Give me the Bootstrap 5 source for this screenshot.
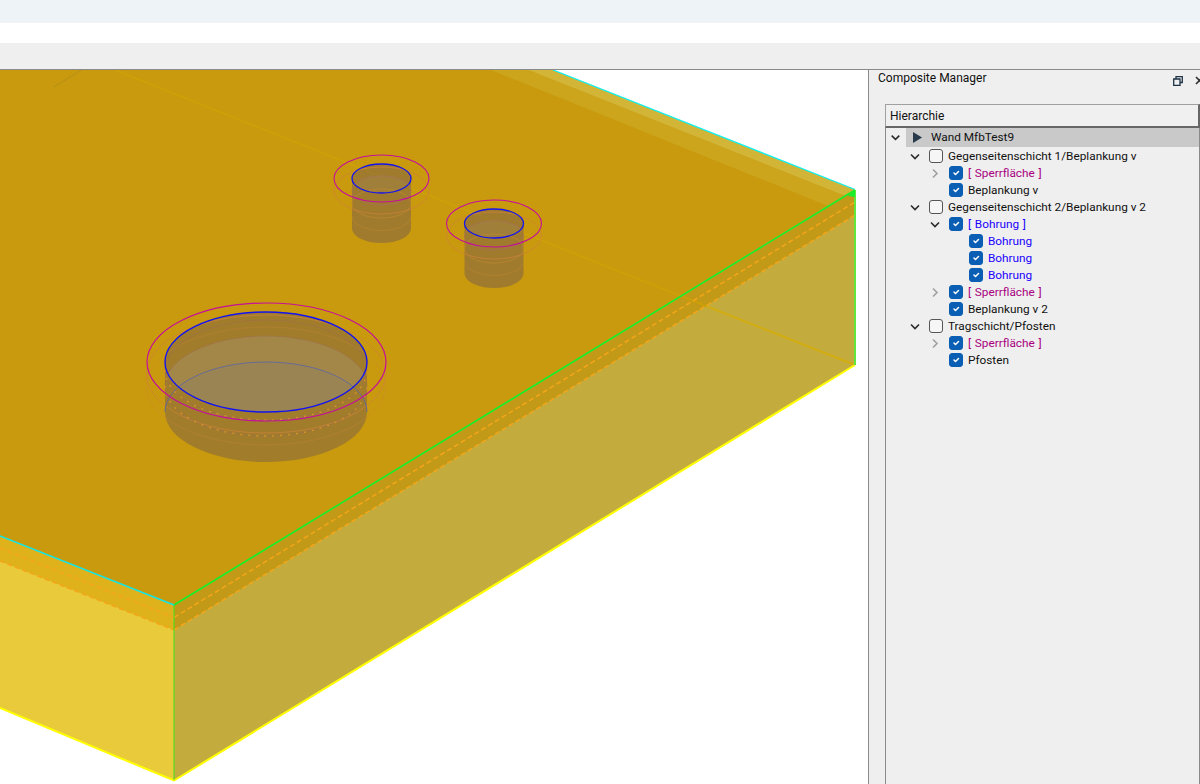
<!DOCTYPE html>
<html lang="de">
<head>
<meta charset="utf-8">
<title>Composite Manager</title>
<link href="https://cdn.jsdelivr.net/npm/bootstrap@5.3.0/dist/css/bootstrap.min.css" rel="stylesheet">
<style>
html,body{height:784px;overflow:hidden;background:#fff}
body{font-family:Roboto,"Noto Sans",sans-serif;font-size:11.8px;color:#111;line-height:17px}
.bar-a{height:23px;background:#eef3f7}
.bar-b{height:20px;background:#fff}
.bar-c{height:27px;background:#efefef;border-bottom:1px solid #8a8a8a}
.workspace{height:714px}
.viewport{width:868px;flex:none}
.viewport svg{display:block}
.side{width:332px;flex:none;background:#efefef;border-left:1px solid #8a8a8a;overflow:hidden}
.side-head{height:34px;padding:0 0 0 9px;white-space:nowrap}
.side-head .title{font-size:12px;line-height:16px;color:#111}
.win-icons{padding-top:6px;width:27px;flex:none;overflow:hidden}
.tree-wrap{margin-left:16px;margin-right:0;height:680px;border-left:1px solid #8a8a8a;border-right:1px solid #8a8a8a;width:315px}
.tree-head{height:24px;background:#f0f0f0;border:1px solid #a0a0a0;border-right:2px solid #666;border-bottom:2px solid #666;margin-left:-1px;margin-right:-1px;padding-left:4px;line-height:22px;font-size:12px}
.tree-row{height:17px;white-space:nowrap}
.tree-row.root{height:19.5px;line-height:19.5px}
.lvl-1{padding-left:19px}.lvl-2{padding-left:39px}.lvl-3{padding-left:59px}
.twisty{width:20px;height:17px;flex:none}
.root .twisty{width:19px}
.tree-check.form-check-input{width:14px;height:14px;margin:0 5px 0 4px;flex:none;border-radius:3px;border:1px solid #555;background-color:#f6f6f6;opacity:1}
.tree-check.form-check-input:checked{background-color:#0a5fb4;border-color:#0a5fb4;background-size:10px}
.root-label{margin-left:1px;flex:1 1 auto;background:#c9c9c9;height:19px;padding-left:7px}
.root-label svg{margin-right:9px}
.t-sperr{color:#a8007f;word-spacing:.8px}
.t-bohr{color:#1a00ff;word-spacing:.8px}
</style>
</head>
<body>
<svg width="0" height="0" class="position-absolute">
<defs>
<symbol id="open" viewBox="0 0 20 17"><path d="M6 6.500l4 4 4-4" fill="none" stroke="#2a2a2a" stroke-width="1.6"/></symbol>
<symbol id="closed" viewBox="0 0 20 17"><path d="M8 4.500l4 4-4 4" fill="none" stroke="#a0a0a0" stroke-width="1.6"/></symbol>
<clipPath id="clipBig"><ellipse cx="266" cy="362" rx="101" ry="50"/></clipPath>
<clipPath id="clipSmall"><ellipse cx="381.5" cy="178.5" rx="29.5" ry="14.5"/></clipPath>
</defs>
</svg>
<div class="bar-a"></div>
<div class="bar-b"></div>
<div class="bar-c"></div>
<div class="workspace d-flex">
  <div class="viewport">
    <svg width="868" height="714" viewBox="0 70 868 714">
      <rect x="0" y="70" width="868" height="714" fill="#fff"/>
      <polygon points="0,536 174,605 174,781 0,708" fill="#e8ca3a"/>
      <polygon points="0,536 174,605 174,630 0,561" fill="#dfb11b"/>
      <polygon points="174,605 855,190 855,365 174,781" fill="#c3ac3d"/>
      <polygon points="174,605 855,190 855,215 174,630" fill="#c29a17"/>
      <polygon points="0,70 553,70 855,189.5 174,605 0,536" fill="#c99a0d"/>
      <polygon points="553,70 855,189.5 845,196 528,70" fill="#d2b437"/>
      <polygon points="528,70 845,196 828,206 491,70" fill="#cca51c"/>
      <line x1="115" y1="70" x2="706" y2="306" stroke="#cd9f08" stroke-width="2"/>
      <line x1="706" y1="306" x2="855" y2="365" stroke="#d2ac10" stroke-width="2"/>
      <line x1="54" y1="87" x2="81" y2="70" stroke="#a98a20" stroke-width="1" stroke-dasharray="2 1"/>

      <g fill="none" stroke-linecap="butt">
        <!-- large bore -->
        <path d="M165 362A101 50 0 0 1 367 362V412A101 50 0 0 1 165 412Z" fill="#7a5f4a" fill-opacity=".5" stroke="none"/>
        <g clip-path="url(#clipBig)" stroke="none">
          <ellipse cx="266" cy="386" rx="101" ry="50" fill="#a8a8a0" fill-opacity=".25"/>
          <ellipse cx="266" cy="412" rx="101" ry="50" fill="#857a80" fill-opacity=".22"/>
        </g>
        <ellipse cx="266" cy="374" rx="119.5" ry="59" stroke="#d0803c" stroke-opacity=".7"/>
        <ellipse cx="266" cy="386" rx="119.5" ry="59" stroke="#d0803c" stroke-opacity=".3"/>
        <ellipse cx="266" cy="370" rx="101" ry="50" stroke="#a06a50" stroke-opacity=".55"/>
        <ellipse cx="266" cy="386" rx="101" ry="50" stroke="#a06a50" stroke-opacity=".5"/>
        <path d="M165 370A101 50 0 0 0 367 370M165 386A101 50 0 0 0 367 386" stroke="#e09a28" stroke-opacity=".85" stroke-dasharray="2 6" stroke-width="1.3"/>
        <path d="M165 412A101 50 0 0 1 367 412" stroke="#5a64a8" stroke-opacity=".8"/>
        <ellipse cx="266.5" cy="362" rx="119.5" ry="59" stroke="#c4109a" stroke-width="1.2"/>
        <ellipse cx="266" cy="362" rx="101" ry="50" stroke="#1414f0" stroke-width="1.4"/>

        <!-- small bores -->
        <g id="bore">
          <path d="M352 178.5A29.5 14.5 0 0 1 411 178.5V228.5A29.5 14.5 0 0 1 352 228.5Z" fill="#7a5f4a" fill-opacity=".52" stroke="none"/>
          <g clip-path="url(#clipSmall)" stroke="none">
            <ellipse cx="381.5" cy="190" rx="29.5" ry="14.5" fill="#a09a90" fill-opacity=".12"/>
          </g>
          <ellipse cx="381.5" cy="190.5" rx="47.5" ry="23.5" stroke="#d0803c" stroke-opacity=".7"/>
          <ellipse cx="381.5" cy="190.5" rx="29.5" ry="14.5" stroke="#a8705a" stroke-opacity=".7"/>
          <ellipse cx="381.5" cy="203.5" rx="29.5" ry="14.5" stroke="#c88a30" stroke-opacity=".55"/>
          <path d="M352 216A29.5 14.5 0 0 0 411 216" stroke="#c88a30" stroke-opacity=".4"/>
          <ellipse cx="381.5" cy="178.5" rx="47.5" ry="23.5" stroke="#c4109a" stroke-width="1.1"/>
          <ellipse cx="381.5" cy="178.5" rx="29.5" ry="14.5" stroke="#1414f0" stroke-width="1.3"/>
        </g>
        <use href="#bore" transform="translate(112.5 45)"/>
      </g>

      <g fill="none">
        <path d="M0 548L174 617.500M0 561L174 630M174 617.500L855 202M174 630L855 215" stroke="#f5a518" stroke-width="1.5" stroke-dasharray="5 3"/>
        <path d="M0 708L174 780.500L855 365" stroke="#ffff00" stroke-width="2"/>
        <path d="M174 605V780" stroke="#3ee41f" stroke-width="1"/>
        <path d="M855 190V365" stroke="#62e63c" stroke-width="2"/>
        <path d="M553 70L855 189.500" stroke="#12f0f0" stroke-width="1.3"/>
        <path d="M0 536L174 605" stroke="#14e6e6" stroke-width="1.6"/>
        <path d="M174 605L855 190" stroke="#16f02a" stroke-width="1.6"/>
      </g>
      <polygon points="848,196 855,190 855,197" fill="#16f02a"/>
    </svg>
  </div>

  <aside class="side">
    <div class="side-head d-flex justify-content-between">
      <span class="title">Composite Manager</span>
      <span class="win-icons d-flex gap-2 align-items-start">
        <svg width="10" height="10" viewBox="0 0 10 10" class="flex-shrink-0"><path d="M3 2.500V.7H9.300V6.500H7M.7 3H7V9.300H.7Z" fill="none" stroke="#1d3345" stroke-width="1.300"/></svg>
        <svg width="10" height="10" viewBox="0 0 10 10" class="flex-shrink-0 ms-1"><path d="M1 1l7 7M8 1L1 8" stroke="#333" stroke-width="1.600"/></svg>
      </span>
    </div>
    <div class="tree-wrap">
      <div class="tree-head">Hierarchie</div>
      <div class="tree-row root d-flex align-items-center">
        <svg class="twisty"><use href="#open"/></svg>
        <div class="root-label d-flex align-items-center">
          <svg width="9" height="11" viewBox="0 0 9 11"><path d="M0 0L9 5.500L0 11Z" fill="#27394a"/></svg>
          <span>Wand MfbTest9</span>
        </div>
      </div>
      <div class="tree-row lvl-1 d-flex align-items-center"><svg class="twisty"><use href="#open"/></svg><input class="form-check-input tree-check" type="checkbox" aria-label="Gegenseitenschicht 1"><span>Gegenseitenschicht 1/Beplankung v</span></div>
      <div class="tree-row lvl-2 d-flex align-items-center"><svg class="twisty"><use href="#closed"/></svg><input class="form-check-input tree-check" type="checkbox" checked aria-label="Sperrfläche"><span class="t-sperr">[ Sperrfläche ]</span></div>
      <div class="tree-row lvl-2 d-flex align-items-center"><span class="twisty"></span><input class="form-check-input tree-check" type="checkbox" checked aria-label="Beplankung v"><span>Beplankung v</span></div>
      <div class="tree-row lvl-1 d-flex align-items-center"><svg class="twisty"><use href="#open"/></svg><input class="form-check-input tree-check" type="checkbox" aria-label="Gegenseitenschicht 2"><span>Gegenseitenschicht 2/Beplankung v 2</span></div>
      <div class="tree-row lvl-2 d-flex align-items-center"><svg class="twisty"><use href="#open"/></svg><input class="form-check-input tree-check" type="checkbox" checked aria-label="Bohrung"><span class="t-bohr">[ Bohrung ]</span></div>
      <div class="tree-row lvl-3 d-flex align-items-center"><span class="twisty"></span><input class="form-check-input tree-check" type="checkbox" checked aria-label="Bohrung"><span class="t-bohr">Bohrung</span></div>
      <div class="tree-row lvl-3 d-flex align-items-center"><span class="twisty"></span><input class="form-check-input tree-check" type="checkbox" checked aria-label="Bohrung"><span class="t-bohr">Bohrung</span></div>
      <div class="tree-row lvl-3 d-flex align-items-center"><span class="twisty"></span><input class="form-check-input tree-check" type="checkbox" checked aria-label="Bohrung"><span class="t-bohr">Bohrung</span></div>
      <div class="tree-row lvl-2 d-flex align-items-center"><svg class="twisty"><use href="#closed"/></svg><input class="form-check-input tree-check" type="checkbox" checked aria-label="Sperrfläche"><span class="t-sperr">[ Sperrfläche ]</span></div>
      <div class="tree-row lvl-2 d-flex align-items-center"><span class="twisty"></span><input class="form-check-input tree-check" type="checkbox" checked aria-label="Beplankung v 2"><span>Beplankung v 2</span></div>
      <div class="tree-row lvl-1 d-flex align-items-center"><svg class="twisty"><use href="#open"/></svg><input class="form-check-input tree-check" type="checkbox" aria-label="Tragschicht"><span>Tragschicht/Pfosten</span></div>
      <div class="tree-row lvl-2 d-flex align-items-center"><svg class="twisty"><use href="#closed"/></svg><input class="form-check-input tree-check" type="checkbox" checked aria-label="Sperrfläche"><span class="t-sperr">[ Sperrfläche ]</span></div>
      <div class="tree-row lvl-2 d-flex align-items-center"><span class="twisty"></span><input class="form-check-input tree-check" type="checkbox" checked aria-label="Pfosten"><span>Pfosten</span></div>
    </div>
  </aside>
</div>
<script src="https://cdn.jsdelivr.net/npm/bootstrap@5.3.0/dist/js/bootstrap.bundle.min.js"></script>
</body>
</html>
